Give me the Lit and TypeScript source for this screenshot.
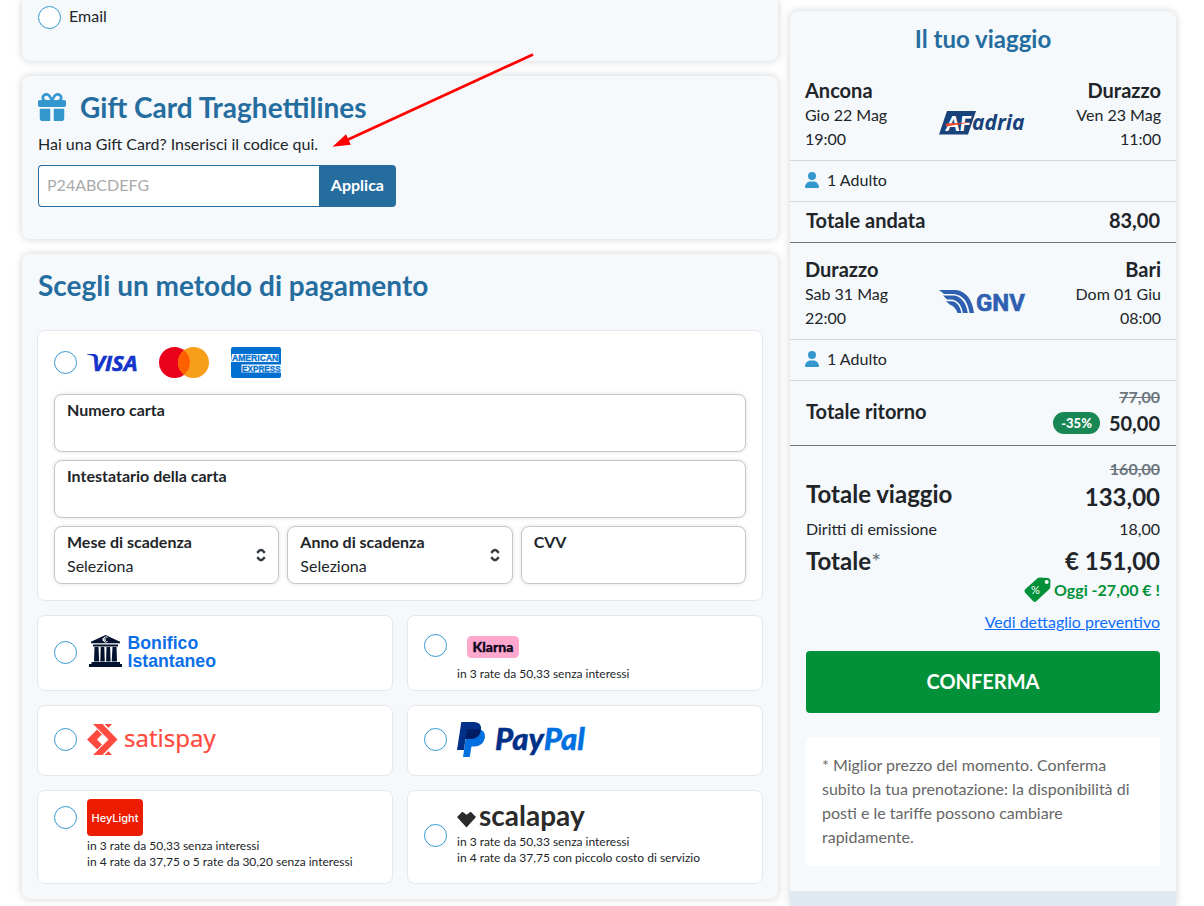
import { LitElement, html, css } from "lit";
import { customElement } from "lit/decorators.js";

const userIcon = html`<svg class="user" width="14" height="16" viewBox="0 0 448 512" aria-hidden="true"><path fill="#3498cf" d="M224 256A128 128 0 1 0 224 0a128 128 0 1 0 0 256zm-45.7 48C79.8 304 0 383.8 0 482.3C0 498.7 13.3 512 29.7 512H418.3c16.4 0 29.7-13.3 29.7-29.7C448 383.8 368.2 304 269.7 304H178.3z"/></svg>`;

const giftIcon = html`<svg width="28" height="28" viewBox="0 0 512 512" aria-hidden="true"><path fill="#3498cf" d="M190.5 68.8L225.3 128H224 152c-22.1 0-40-17.9-40-40s17.9-40 40-40h2.2c14.9 0 28.8 7.9 36.3 20.8zM64 88c0 14.4 3.5 28 9.6 40H32c-17.7 0-32 14.3-32 32v64c0 17.7 14.3 32 32 32H480c17.7 0 32-14.3 32-32V160c0-17.7-14.3-32-32-32H438.4c6.1-12 9.6-25.6 9.6-40c0-48.6-39.4-88-88-88h-2.2c-31.9 0-61.5 16.9-77.7 44.4L256 85.5l-24.1-41C215.7 16.9 186.1 0 154.2 0H152C103.4 0 64 39.4 64 88zm336 0c0 22.1-17.9 40-40 40H288h-1.3l34.8-59.2C329.1 55.9 342.9 48 357.8 48H360c22.1 0 40 17.9 40 40zM32 288V464c0 26.5 21.5 48 48 48H224V288H32zM288 512H432c26.5 0 48-21.5 48-48V288H288V512z"/></svg>`;

const sortIcon = html`<svg class="sort" width="10" height="16" viewBox="0 0 10 16" aria-hidden="true"><path d="M1.200 5.800 3.500 3.500Q5 2.300 6.500 3.500L8.800 5.800M1.200 10.200 3.500 12.500Q5 13.700 6.500 12.500L8.800 10.200" fill="none" stroke="#343a40" stroke-width="2.400"/></svg>`;

const tagIcon = html`<svg width="27" height="26" viewBox="0 0 27 26" aria-hidden="true"><path fill="#029139" d="M13.5 1.2Q14.500.5 15.800.5L24 .9Q26.200 1.200 26.400 3.200L26.300 10Q26.200 11.400 25.200 12.300L12.200 24.300Q10.600 25.600 9.200 24.200L1 15.400Q-.4 13.700 1.200 12.200Z"/><circle cx="22.700" cy="5" r="2" fill="#f5f9fc"/><text x="7" y="17" font-family="Lato" font-size="11" font-weight="400" fill="#fff">%</text></svg>`;

const visa = html`<svg width="50" height="31" viewBox="0 0 50 31" role="img" aria-label="Visa"><path fill="#1434cb" d="M0 7h7.500q2 .2 2.500 2l1.500 5.500Q7.500 8.200 0 7.500z"/><text x="5" y="23.500" font-family="Open Sans" font-size="22" font-weight="700" font-style="italic" fill="#1434cb" stroke="#1434cb" stroke-width=".6">VISA</text></svg>`;
const mastercard = html`<svg width="50" height="31" viewBox="0 0 50 31" role="img" aria-label="Mastercard"><circle cx="15.500" cy="15.500" r="15.500" fill="#eb001b"/><circle cx="34.500" cy="15.500" r="15.500" fill="#f79e1b"/><path fill="#ff5f00" d="M25 3.250a15.500 15.500 0 0 1 0 24.500a15.500 15.500 0 0 1 0-24.500z"/></svg>`;
const amex = html`<svg width="50" height="31" viewBox="0 0 50 31" role="img" aria-label="American Express"><rect width="50" height="31" rx="2" fill="#016fd0"/><path d="M1 7h46.500v8H0zM10.500 17.500H50v8H10.500z" fill="#fff"/><g font-family="Liberation Sans" font-weight="700" fill="#016fd0" stroke="#016fd0" stroke-width=".3"><text x="1" y="14.300" font-size="8.600">AMERICAN</text><text x="11" y="24.600" font-size="8.200">EXPRESS</text></g></svg>`;

const bonifico = html`<svg width="140" height="36" viewBox="0 0 140 36" role="img" aria-label="Bonifico Istantaneo"><g fill="#03122f"><path d="M18.500 1 33 7.800v1.400H4V7.800zM6 10.500h25v2H6zM4.500 28h28.500v2H35v3H2v-3h2.500z"/><path d="M7.500 13h4l.7 14.500H7zM13.700 13h3.600l.5 14.500h-4.500zM19.500 13h3.600l.5 14.500h-4.500zM25.500 13h4l.5 14.500h-5.300z"/></g><path d="M20.500 3.500a2.600 2.600 0 1 0 0 4M15.500 5h3.500M15.500 6.200h3.500" fill="none" stroke="#fff" stroke-width="1"/><g font-family="Liberation Sans" font-size="17.700" font-weight="700" fill="#0a6fe8"><text x="40.500" y="15">Bonifico</text><text x="40.500" y="33">Istantaneo</text></g></svg>`;

const klarna = html`<svg width="64" height="37" viewBox="0 0 64 37" role="img" aria-label="Klarna"><rect x="10" y="9" width="52" height="22" rx="4.500" fill="#ffa8cd"/><text x="36" y="25" text-anchor="middle" font-family="Lato" font-size="14" font-weight="900" fill="#0b051d" stroke="#0b051d" stroke-width=".3">Klarna</text></svg>`;

const satispay = html`<svg width="144" height="37" viewBox="0 0 144 37" role="img" aria-label="Satispay"><g fill="#ff4a40"><path d="M6 3h9.500l15 15.500L15.500 34H6l15.500-15.500z"/><path d="M17.500 3H25l-3.700 4zM17.500 34H25l-3.700-4z"/><path d="M10.200 8.500 15 13.300 10 18.500l5 5.200-4.800 4.800L0 18.500z"/></g><path d="M9.500 7.500 16 14M9.500 29.500 16 23M16 2l6 6M16 35l6-6" stroke="#fff" stroke-width="1"/><text x="37" y="26" font-family="Noto Sans" font-size="24" fill="#ff4a40" stroke="#ff4a40" stroke-width=".2">satispay</text></svg>`;

const paypal = html`<svg width="144" height="37" viewBox="0 0 144 37" role="img" aria-label="PayPal"><path fill="#0070e0" d="M10 9h14.500q4.300 2.500 3.300 8-1.800 8.500-10.800 8.500h-2.500L12.700 36H6z"/><path fill="#003087" d="M4.300 1h13.200q7.500.5 6.400 8-1.300 9-11 9H8.500L7 29H0z"/><path fill="#001c64" d="M10 8.200h13.800Q23.500 17.800 13 18H8.600z"/><g font-family="Lato" font-size="31" font-weight="900" font-style="italic" stroke-width=".4"><text x="38" y="29" fill="#003087" stroke="#003087">Pay<tspan fill="#0070e0" stroke="#0070e0">Pal</tspan></text></g></svg>`;

const heylight = html`<svg width="56" height="37" viewBox="0 0 56 37" role="img" aria-label="HeyLight"><rect width="56" height="37" rx="4" fill="#eb1c00"/><text x="28" y="23" text-anchor="middle" font-family="Inter" font-size="11" font-weight="500" fill="#fff">HeyLight</text></svg>`;

const scalapay = html`<svg width="144" height="28" viewBox="0 0 144 28" role="img" aria-label="Scalapay"><path fill="#2b2b2b" d="M0 13 5 8h.8l3.700 2.700L13.200 8h.8l5 5L9.500 23.500z"/><text x="22" y="22" font-family="Lato" font-size="28" font-weight="700" fill="#2b2b2b">scalapay</text></svg>`;

const adria = html`<svg width="88" height="24" viewBox="0 0 88 24" role="img" aria-label="Adria Ferries"><path fill="#17427a" d="M8 0h29l-8 23.500H0z"/><text x="7" y="19.500" font-family="Lato" font-size="21" font-weight="900" font-style="italic" fill="#fff">AF</text><path d="M7 12.500 31 11.500 7 15.500z" fill="#f0432c"/><text x="33" y="19" font-family="Open Sans" font-size="21" font-weight="700" font-style="italic" fill="#17427a">adria</text></svg>`;

const gnv = html`<svg width="88" height="24" viewBox="0 0 88 24" role="img" aria-label="GNV"><path fill="#2f5fb0" d="M0 0h17Q32 2 35 23h-4.500Q28 5.500 15 4H5z"/><path fill="#2f5fb0" d="M4 5.500h11Q26 7 28.800 23H24Q21.500 11 13.500 9.500H8z"/><path fill="#2f5fb0" d="M7 11.300h6.500Q20.500 13 22.500 23H18.500Q16 16 11 14.800z"/><text x="37" y="21" font-family="Roboto" font-size="24" font-weight="700" fill="#2f5fb0" stroke="#2f5fb0" stroke-width=".6">GNV</text></svg>`;

interface Stop { city: string; date: string; time: string }

const leg = (from: Stop, to: Stop, logo: unknown) => html`
  <div class="leg">
    <div><strong>${from.city}</strong><span>${from.date}</span><span>${from.time}</span></div>
    ${logo}
    <div class="end"><strong>${to.city}</strong><span>${to.date}</span><span>${to.time}</span></div>
  </div>
  <div class="line pax">${userIcon}<span>1 Adulto</span></div>`;

const method = (id: string, logo: unknown, notes: string[] = [], mode = "") => html`
  <label class="panel pay ${mode}">
    <input class="radio" type="radio" name="method" value=${id} />
    ${logo}
    ${notes.length ? html`<span class="notes">${notes.map((n) => html`<span>${n}</span>`)}</span>` : ""}
  </label>`;

@customElement("app-root")
export class AppRoot extends LitElement {
  static styles = css`
    :host { display: block; font: 16px/24px Lato, Carlito, sans-serif; color: #212529; background: #fff; }
    * { box-sizing: border-box; }
    h2, p { margin: 0; }
    svg { display: block; flex: none; overflow: visible; }
    .page { position: relative; display: grid; grid-template-columns: minmax(0, 1fr) 386px; gap: 12px; padding: 0 28px 0 22px; min-height: 100vh; }
    .main { display: flex; flex-direction: column; gap: 15px; padding-bottom: 7px; }
    .card { background: #f5f9fc; border-radius: 8px; box-shadow: 0 0 8px rgba(0, 0, 0, 0.18); padding: 16px; }
    .contact { border-radius: 0 0 8px 8px; padding: 5px 16px 32px; }
    .contact label { display: flex; align-items: center; gap: 8px; }
    .contact span { padding-bottom: 2px; line-height: 22px; }
    .radio { appearance: none; width: 23px; height: 23px; margin: 0; border: 1px solid #3498cf; border-radius: 50%; background: #fff; flex: none; }
    h2 { color: #266d9f; font-size: 28px; line-height: 30px; font-weight: 700; }
    .gift { padding-bottom: 32px; }
    .gift h2 { display: flex; align-items: center; gap: 14px; }
    .gift p { margin: 10px 0 9px; }
    .code { display: flex; width: 358px; max-width: 100%; height: 42px; }
    .code input { flex: 1; min-width: 0; border: 1px solid #266d9f; border-right: 0; border-radius: 4px 0 0 4px; padding: 0 8px 2px; font: inherit; background: #fff; color: inherit; }
    .code input::placeholder { color: #aaa; opacity: 1; }
    .code button { border: 0; border-radius: 0 4px 4px 0; padding: 0 12px 2px; font: inherit; font-weight: 700; color: #fff; background: #266d9f; }
    .methods { display: grid; grid-template-columns: 1fr 1fr; gap: 14px; margin: 30px -1px -1px; }
    .panel { background: #fff; border: 1px solid #e4e8ec; border-radius: 8px; }
    .cards { grid-column: 1 / -1; padding: 16px; display: flex; flex-direction: column; gap: 8px; }
    .brands { display: flex; align-items: center; gap: 22px; margin-bottom: 8px; }
    .brands .radio { margin-right: -12px; }
    .expiry { display: grid; grid-template-columns: repeat(3, minmax(0, 1fr)); gap: 8px; }
    .field { display: flex; align-items: center; height: 58px; padding: 0 12px; border: 1px solid #c4c7ca; border-radius: 8px; box-shadow: 0 0 4px rgba(0, 0, 0, 0.12); background: #fff; }
    .box { flex: 1; min-width: 0; display: flex; flex-direction: column; padding-bottom: 2px; }
    .box b { font-weight: 700; }
    .box input, .box select { appearance: none; border: 0; padding: 0; margin: 0; height: 24px; width: 100%; font: inherit; color: inherit; background: none; outline: 0; }
    .pay { display: grid; grid-template-columns: 23px 1fr; gap: 2px 10px; padding: 0 16px 2px; align-items: center; align-content: center; min-height: 71px; }
    .pay.installments { padding: 2px 16px 0; min-height: 76px; }
    .pay.top { align-content: start; padding-top: 8px; min-height: 94px; }
    .pay.span { padding-bottom: 4px; }
    .notes { grid-column: 2; display: flex; flex-direction: column; font-size: 12px; line-height: 16px; }
    .span .radio { grid-row: span 2; }

    aside { margin-top: 11px; background: #f5f9fc; border-radius: 8px 8px 0 0; box-shadow: 0 0 8px rgba(0, 0, 0, 0.18); display: flex; flex-direction: column; }
    aside h2 { font-size: 24px; line-height: 28px; padding: 14px 16px 11px; text-align: center; }
    .leg { display: flex; justify-content: space-between; align-items: center; padding: 14px 15px 9px; }
    .leg > div { display: flex; flex-direction: column; flex: 1; }
    .leg > svg { margin-top: 16px; }
    .leg strong { font-size: 20px; line-height: 25px; font-weight: 700; }
    .leg .end { text-align: right; }
    .line { display: flex; align-items: center; min-height: 41px; padding: 0 16px; border-top: 1px solid #d3d8dc; }
    .pax { padding: 0 15px 2px; gap: 8px; }
    .line.sum { min-height: 42px; justify-content: space-between; font-size: 20px; font-weight: 700; border-bottom: 1px solid #6c757d; }
    .sum > span { padding-bottom: 4px; }
    .sum > .prices { display: flex; flex-direction: column; align-items: flex-end; padding: 4px 0 8px; }
    .prices > span { display: flex; align-items: center; gap: 9px; line-height: 28px; }
    s { font-size: 16px; line-height: 24px; color: #6c757d; font-weight: 700; }
    .badge { background: #198754; color: #fff; border-radius: 11px; padding: 0 8px; font-size: 13px; line-height: 22px; font-weight: 900; }
    .totals { display: grid; grid-template-columns: 1fr auto; padding: 11px 16px 0; }
    .totals .end { text-align: right; }
    .totals s { grid-column: 1 / -1; text-align: right; }
    .big { font-size: 24px; line-height: 32px; font-weight: 700; }
    .big.raised { line-height: 26px; }
    .small { line-height: 32px; }
    .big small { font-size: 24px; font-weight: 400; color: #6c757d; line-height: 16px; }
    .save, .more { display: flex; justify-content: flex-end; align-items: center; gap: 3px; padding: 0 16px; }
    .save { color: #029139; font-weight: 700; }
    .more { margin: 7px 0 1px; }
    a { color: #0d6efd; }
    .confirm { margin: 16px 16px 24px; height: 62px; border: 0; border-radius: 4px; padding: 0 16px 2px; background: #029139; color: #fff; font: 700 20px/24px Lato, Carlito, sans-serif; }
    .note { margin: 0 16px 25px; padding: 16px 16px 17px; background: #fff; border-radius: 4px; color: #666; }
    .foot { flex: 1; min-height: 15px; background: #e1e9f0; }
    .arrow { position: absolute; left: 330px; top: 50px; pointer-events: none; }
    @media (max-width: 900px) { .page { grid-template-columns: minmax(0, 1fr); } .arrow { display: none; } }
  `;

  render() {
    return html`
      <div class="page">
        <div class="main">
          <section class="card contact">
            <label><input class="radio" type="radio" name="contact" /><span>Email</span></label>
          </section>
          <section class="card gift">
            <h2>${giftIcon}<span>Gift Card Traghettilines</span></h2>
            <p><label for="code">Hai una Gift Card? Inserisci il codice qui.</label></p>
            <div class="code"><input id="code" type="text" placeholder="P24ABCDEFG" /><button type="button">Applica</button></div>
          </section>
          <section class="card">
            <h2>Scegli un metodo di pagamento</h2>
            <div class="methods">
              <div class="panel cards">
                <label class="brands"><input class="radio" type="radio" name="method" value="card" />${visa}${mastercard}${amex}</label>
                <label class="field"><span class="box"><b>Numero carta</b><input type="text" /></span></label>
                <label class="field"><span class="box"><b>Intestatario della carta</b><input type="text" /></span></label>
                <div class="expiry">
                  <label class="field"><span class="box"><b>Mese di scadenza</b><select><option>Seleziona</option></select></span>${sortIcon}</label>
                  <label class="field"><span class="box"><b>Anno di scadenza</b><select><option>Seleziona</option></select></span>${sortIcon}</label>
                  <label class="field"><span class="box"><b>CVV</b><input type="text" /></span></label>
                </div>
              </div>
              ${method("bonifico", bonifico)}
              ${method("klarna", klarna, ["in 3 rate da 50,33 senza interessi"], "installments")}
              ${method("satispay", satispay)}
              ${method("paypal", paypal)}
              ${method("heylight", heylight, ["in 3 rate da 50,33 senza interessi", "in 4 rate da 37,75 o 5 rate da 30,20 senza interessi"], "top")}
              ${method("scalapay", scalapay, ["in 3 rate da 50,33 senza interessi", "in 4 rate da 37,75 con piccolo costo di servizio"], "span")}
            </div>
          </section>
        </div>
        <aside>
          <h2>Il tuo viaggio</h2>
          ${leg({ city: "Ancona", date: "Gio 22 Mag", time: "19:00" }, { city: "Durazzo", date: "Ven 23 Mag", time: "11:00" }, adria)}
          <div class="line sum"><span>Totale andata</span><span>83,00</span></div>
          ${leg({ city: "Durazzo", date: "Sab 31 Mag", time: "22:00" }, { city: "Bari", date: "Dom 01 Giu", time: "08:00" }, gnv)}
          <div class="line sum"><span>Totale ritorno</span><span class="prices"><s>77,00</s><span><span class="badge">-35%</span>50,00</span></span></div>
          <div class="totals">
            <s>160,00</s>
            <span class="big raised">Totale viaggio</span><span class="big end">133,00</span>
            <span class="small">Diritti di emissione</span><span class="small end">18,00</span>
            <span class="big">Totale<small>*</small></span><span class="big end">€ 151,00</span>
          </div>
          <div class="save">${tagIcon}<span>Oggi -27,00 € !</span></div>
          <div class="more"><a href="#dettaglio">Vedi dettaglio preventivo</a></div>
          <button class="confirm" type="button">CONFERMA</button>
          <p class="note">* Miglior prezzo del momento. Conferma subito la tua prenotazione: la disponibilità di posti e le tariffe possono cambiare rapidamente.</p>
          <div class="foot"></div>
        </aside>
        <svg class="arrow" width="206" height="100" viewBox="0 0 206 100" aria-hidden="true"><path d="M203 4.500 16 90.500" stroke="#f00" stroke-width="2.700"/><path d="M2.500 96.800 16 84.300l4.800 10.400z" fill="#f00"/></svg>
      </div>`;
  }
}
